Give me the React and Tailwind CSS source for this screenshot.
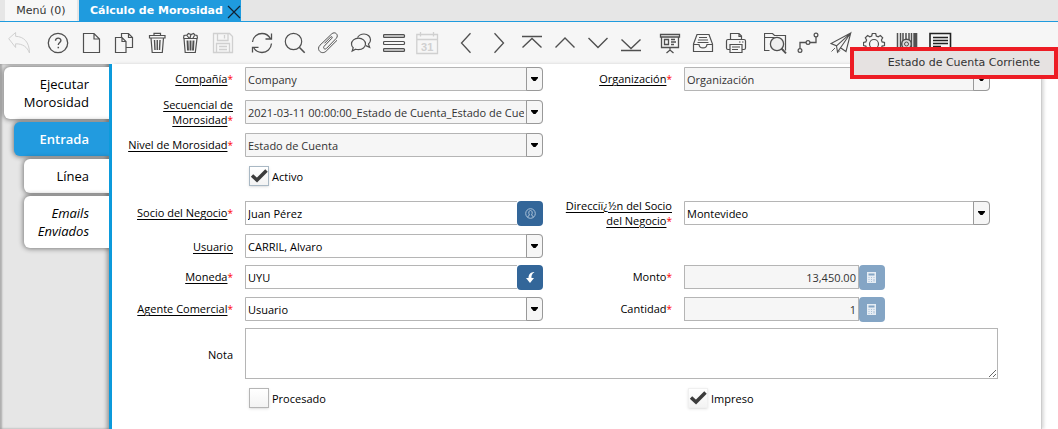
import React from "react";

const ICONS = {
  undo: (
    <path d="M.7 7.6 7.6 1.5v3.8C16 5.6 21.3 11 21.5 22c-2.4-6-6.4-9.200-13.900-9.200v3.700z" />
  ),
  help: (
    <>
      <circle cx="11" cy="12" r="9.700" strokeWidth="1.300" />
      <path d="M8.500 9.800c0-3.600 5.400-3.500 5.400-.3 0 2-2.600 2.200-2.600 4.500" strokeWidth="1.400" />
      <path d="M11.300 15.800v1.500" strokeWidth="1.500" />
    </>
  ),
  page: <path d="M3.500 2.500h10.500l5.500 5.500v13.500h-16zM14 2.500v5.500h5.500" strokeWidth="1.200" />,
  copy: (
    <>
      <path d="M2.500 6.500h6.500l4 4v11h-10.500zM9 6.500v4h4" strokeWidth="1.200" />
      <path d="M8.500 6.500v-4h7l4 4v10h-6.500M15.500 2.500v4h4" strokeWidth="1.200" />
    </>
  ),
  trash: (
    <>
      <path d="M3.500 4.500h15.500v2.500h-15.500zM8 4.500v-2.200h6.500v2.200M5 7l1.200 14.500h10.100L17.500 7" strokeWidth="1.200" />
      <path d="M8.500 9l.5 10M11.250 9v10M14 9l-.5 10" strokeWidth="1.400" />
    </>
  ),
  trashFull: (
    <>
      <path d="M4.500 7.500h14M5 7.500l1.200 14h10.100L18 7.500M4.500 7.500l.5-3 3-.5 1.500-1.500 2.500 1 2.500-1 1.500 1.500 2 .5.500 3M8 4.500l2 2.500M12 3.500l-1 3.500M15.500 4.500l-1.500 2.500" strokeWidth="1.200" />
      <path d="M8.500 9.500l.5 10M11.500 9.500v10M14.500 9.500l-.5 10" strokeWidth="1.900" />
    </>
  ),
  save: (
    <>
      <path d="M1.500 2.500h16l3 3v16h-19zM5.500 2.500v7h10.500v-7M12.500 4v3.500M4.500 21.500v-9h13v9M7 15.500h8M7 18.500h8" strokeWidth="1.300" />
    </>
  ),
  refresh: (
    <>
      <path d="M1.500 11C2 5.500 6.500 2.500 11 2.500c3.500 0 6.600 1.800 8.400 5M20.500 2.500v5.500h-6M20.500 12.500C20 18 16 21.500 11 21.500c-3.500 0-6.800-2-8.400-5M1.500 21.500v-5.200h6" strokeWidth="1.300" />
    </>
  ),
  search: (
    <>
      <circle cx="9.500" cy="10.500" r="8.200" strokeWidth="1.200" />
      <path d="m15.500 16.500 5.200 5.200" strokeWidth="1.600" />
    </>
  ),
  clip: (
    <path d="m14.800 7.300-7.600 7.900c-1.700 1.800.6 3.900 2.300 2.200l9.700-10c3.200-3.400-1.300-7.700-4.600-4.400L3 14.200c-4.300 4.500 1.800 10.200 6.200 5.900L20 9.300M14.800 7.300c.9-1 .2-2.300-1.100-1.300l-6.200 6.300" strokeWidth="1" />
  ),
  chat: (
    <>
      <path d="M7.500 6.500C9 4 11.500 3 14 3c4 0 6.500 2.700 6.500 5.800 0 1.900-.8 3.400-2 4.300l1.200 3.200-3.900-1.700" strokeWidth="1.200" />
      <path d="M8.500 7.200c4 0 7 2.500 7 5.700s-3 5.700-7 5.700c-1 0-2-.1-2.900-.4L2.200 20l1-3.200C2 15.700 1.500 14.500 1.500 12.900c0-3.200 3-5.700 7-5.700z" strokeWidth="1.200" />
    </>
  ),
  list: (
    <>
      <rect x=".5" y="3.500" width="21" height="3" rx="1" fill="#bbb" strokeWidth="1.200" />
      <rect x=".5" y="10.500" width="21" height="3" rx="1" strokeWidth="1.200" />
      <rect x=".5" y="17.500" width="21" height="3" rx="1" fill="#bbb" strokeWidth="1.200" />
    </>
  ),
  calendar: (
    <>
      <path d="M.8 3.500h20.700v19H.8zM.8 8.500h20.700M4.500 1v4.500M17.500 1v4.500" strokeWidth="1.300" />
      <text x="11.200" y="19.500" textAnchor="middle" fontSize="11" fontWeight="bold" fontFamily="Liberation Sans, sans-serif" fill="currentColor" stroke="none">31</text>
    </>
  ),
  left: <path d="M15.500 2.300 6.500 12l9 9.700" strokeWidth="1.300" />,
  right: <path d="M6.500 2.300l9 9.700-9 9.700" strokeWidth="1.300" />,
  first: <path d="M1 5.500h20M1.500 16.500 11 7.500l9.500 9" strokeWidth="1.400" />,
  up: <path d="M1.500 16.500 11 7l9.500 9.500" strokeWidth="1.400" />,
  down: <path d="M1.500 7 11 16.500 20.500 7" strokeWidth="1.400" />,
  last: <path d="M1.500 8.500 11 17.500l9.500-9M1 19.500h20" strokeWidth="1.400" />,
  board: (
    <>
      <path d="M1.500 3.500h19v2.500h-19zM2.500 6v10.500h17V6M11 16.500v3M7.500 22l3.500-3 3.500 3" strokeWidth="1.300" />
      <path d="M5.500 8.500h4v5h-4zM12 8.500h4M12 11h5M12 13.500h3" strokeWidth="1.300" />
    </>
  ),
  tray: (
    <>
      <path d="M1.500 13 5 3.500h12L20.500 13v7.500h-19zM1.500 13.500h5.500c.5 4.500 7.500 4.500 8 0h5.500" strokeWidth="1.200" />
      <path d="M7 6.500h8M6 9h10M5.500 11.500h11" strokeWidth="1.200" />
    </>
  ),
  printer: (
    <>
      <path d="M5.500 8.500v-6h8.500l2.500 2.500v3.500M14 2.500v3h2.500M4.500 18.500H3c-1 0-1.500-.5-1.500-1.500v-7c0-1 .5-1.500 1.500-1.500h16c1 0 1.500.5 1.500 1.500v7c0 1-.5 1.500-1.500 1.500h-1.500M5 13.500h12v8H5z" strokeWidth="1.200" />
      <path d="M7 16h8M7 18.500h6M14 11h1.500M17 11h1.500" strokeWidth="1.200" />
    </>
  ),
  folder: (
    <>
      <path d="M5.500 19.500h-5v-17h8l2 2h11v15M.5 6.500h10" strokeWidth="1.200" />
      <circle cx="13" cy="13" r="6.600" fill="#f0f0f0" strokeWidth="1.300" />
      <path d="m17.500 17.500 4.500 4.800" strokeWidth="1.900" />
    </>
  ),
  workflow: (
    <>
      <circle cx="3" cy="19.500" r="1.900" strokeWidth="1.200" />
      <circle cx="11" cy="11.500" r="1.900" strokeWidth="1.200" />
      <circle cx="19" cy="4" r="1.900" strokeWidth="1.200" />
      <path d="M3 17.500v-6h6M13 11.500h6V6" strokeWidth="1.300" />
    </>
  ),
  plane: (
    <>
      <path d="M20.700 2 1 12.500l5.500 2.300L20.700 2 16 20.500l-5.500-3.700L20.700 2M6.500 14.800l1 6.200 3-4.200" strokeWidth="1.100" />
      <path d="M5 17l-3.500 3.500M10 19.500l-2 2" strokeWidth=".9" />
    </>
  ),
  gear: (
    <>
      <path d="M9.300 2.500h3.400l.6 2.500 1.900.8 2.200-1.300 2.300 2.300-1.300 2.200.7 1.900 2.400.6v3l-2.400.6-.7 1.900 1.300 2.200-2.300 2.300-2.200-1.300-1.900.8-.6 2.500H9.300L8.700 21l-1.900-.8-2.200 1.300-2.300-2.300L3.600 17l-.8-1.900-2.300-.6v-3l2.300-.6.800-1.900-1.300-2.200 2.300-2.300 2.200 1.300L8.700 5z" strokeWidth="1.200" />
      <circle cx="11" cy="13" r="4.500" strokeWidth="1.200" />
    </>
  ),
  barcode: (
    <>
      <path d="M1.500 2v20M4.500 2v20M7 2v20M10 2v20M13 2v20M15.500 2v20" strokeWidth="1.500" />
      <path d="M19.300 2v20" strokeWidth="4" />
      <circle cx="10.500" cy="13" r="4.800" fill="#ddd" strokeWidth="1.500" />
      <circle cx="10.500" cy="13" r="2" />
    </>
  ),
  form: (
    <g className="text-[#222]">
      <path d="M1 2.500h20.500v19H1z" stroke="currentColor" strokeWidth="1.600" />
      <path d="M4 6.500h15M4 9.500h15M4 12.500h15M4 15.500h8" stroke="currentColor" strokeWidth="1.600" />
    </g>
  ),
};

const TOOL_GROUPS = [
  [["undo", "Deshacer", true]],
  [["help", "Ayuda"], ["page", "Nuevo"], ["copy", "Copiar"], ["trash", "Eliminar"], ["trashFull", "Eliminar selección"], ["save", "Guardar", true]],
  [["refresh", "Refrescar"], ["search", "Buscar"], ["clip", "Adjunto"], ["chat", "Chat"], ["list", "Cuadrícula"], ["calendar", "Calendario", true]],
  [["left", "Anterior"], ["right", "Siguiente"], ["first", "Primero"], ["up", "Arriba"], ["down", "Abajo"], ["last", "Último"]],
  [["board", "Informe"], ["tray", "Archivo"], ["printer", "Imprimir"]],
  [["folder", "Zoom"], ["workflow", "Flujo"], ["plane", "Solicitudes"], ["gear", "Proceso"], ["barcode", "Producto"], ["form", "Formulario"]],
];

function ToolButton({ name, label, disabled }) {
  return (
    <button
      type="button"
      aria-label={label}
      disabled={disabled}
      className={`flex h-full w-[33px] shrink-0 items-center justify-center ${disabled ? "text-[#d0d0d0]" : "text-[#505050]"}`}
    >
      <svg width="23" height="24" viewBox="0 0 23 24" fill="none" stroke="currentColor" aria-hidden="true">
        {ICONS[name]}
      </svg>
    </button>
  );
}

function Label({ htmlFor, children, required, link = true }) {
  return (
    <label htmlFor={htmlFor} className="flex h-6 items-center justify-end text-right leading-[15px]">
      <span>
        <span className={link ? "underline underline-offset-2" : ""}>{children}</span>
        {required && <span className="text-[10px] text-[#ff0000]">*</span>}
      </span>
    </label>
  );
}

function Select({ id, value, readOnly, className = "" }) {
  return (
    <div className={`flex h-6 ${className}`}>
      <select
        id={id}
        className={`w-full min-w-0 appearance-none rounded-r border border-[#b5b5b5] pt-0.5 pr-[18px] pl-[2px] ${readOnly ? "bg-[#f6f6f6] text-[#333]" : "bg-white"}`}
      >
        <option>{value}</option>
      </select>
      <span className="pointer-events-none -ml-[17px] flex w-[17px] shrink-0 items-center justify-center rounded-r border border-[#999] bg-[#f6f6f6]">
        <svg width="7" height="4" viewBox="0 0 7 4" aria-hidden="true">
          <path d="M0 0h7v1L4.500 4h-2L0 1z" fill="#000" />
        </svg>
      </span>
    </div>
  );
}

function Lookup({ id, value, label, children }) {
  return (
    <div className="flex h-6">
      <input id={id} defaultValue={value} className="w-full min-w-0 border border-r-0 border-[#b5b5b5] bg-white pt-0.5 pl-[2px]" />
      <button type="button" aria-label={label} className="flex h-[25px] w-[26px] shrink-0 items-center justify-center rounded bg-[#336699]">
        {children}
      </button>
    </div>
  );
}

function NumberField({ id, value }) {
  return (
    <div className="flex h-6 w-[64%]">
      <input id={id} defaultValue={value} readOnly className="w-full min-w-0 border border-[#b5b5b5] bg-[#f6f6f6] pt-0.5 pr-[2px] text-right text-[#333]" />
      <button type="button" disabled aria-label="Calculadora" className="flex h-[25px] w-[26px] shrink-0 items-center justify-center rounded bg-[#84a5c5]">
        <svg width="9" height="11" viewBox="0 0 9 11" aria-hidden="true">
          <path d="M0 0h9v11H0z" fill="#e6edf4" />
          <path d="M1.500 1.500h6v2h-6z" fill="#84a5c5" />
          <path d="M1.500 5h1v1h-1zM4 5h1v1H4zM6.500 5h1v1h-1zM1.500 7h1v1h-1zM4 7h1v1H4zM6.500 7h1v2.500h-1zM1.500 9h1v1h-1zM4 9h1v1H4z" fill="#a9c0d7" />
        </svg>
      </button>
    </div>
  );
}

function Check({ id, label, checked, border }) {
  return (
    <div className="flex h-5 items-center gap-[3px] pl-1">
      <span className="grid h-5 w-5 shrink-0">
        <input
          id={id}
          type="checkbox"
          defaultChecked={checked}
          className={`peer col-start-1 row-start-1 h-5 w-5 appearance-none border bg-linear-to-b from-white to-[#f3f3f3] shadow-sm ${border}`}
        />
        <svg width="20" height="20" viewBox="0 0 20 20" aria-hidden="true" className="pointer-events-none col-start-1 row-start-1 hidden peer-checked:block">
          <path d="M3 9.500 8 14 17.500 4.500" fill="none" stroke="#3c3c3c" strokeWidth="3.500" />
        </svg>
      </span>
      <label htmlFor={id} className="pt-0.5">{label}</label>
    </div>
  );
}

const SIDE_TAB = "flex justify-end rounded-l-md py-2 pr-5 text-right leading-[18px] shadow-[0_0_5px_1px_rgba(0,0,0,0.45)]";

export default function App() {
  return (
    <div className="relative flex min-h-screen flex-col overflow-hidden bg-white font-['Open_Sans','Noto_Sans',sans-serif] text-[11px] text-black">
      <nav className="flex h-[22px] border-b border-[#1f9bde] bg-[#e6e6e6] pl-[5px] font-['DejaVu_Sans',sans-serif]">
        <a href="#menu" className="flex w-[72px] items-center justify-center bg-[#f7f7f7] pt-0.5 text-[#333]">Menú (0)</a>
        <div className="ml-[2px] flex items-center gap-1 bg-[#1f9bde] pt-0.5 pl-[11px] text-white">
          <a href="#morosidad" className="font-bold">Cálculo de Morosidad</a>
          <button type="button" aria-label="Cerrar" className="text-[#123]">
            <svg width="14" height="14" viewBox="0 0 14 14" fill="none" stroke="currentColor" strokeWidth="1.200" aria-hidden="true">
              <path d="m1 1 12 12M13 1 1 13" />
            </svg>
          </button>
        </div>
      </nav>

      <div role="toolbar" className="flex h-[42px] gap-1.5 bg-[#f6f6f6] pl-[3px]">
        {TOOL_GROUPS.map((group, i) => (
          <div key={i} className="flex">
            {group.map(([name, label, disabled]) => (
              <ToolButton key={name} name={name} label={label} disabled={disabled} />
            ))}
          </div>
        ))}
      </div>

      <main className="flex flex-1">
        <nav className="flex w-28 shrink-0 flex-col gap-[3px] overflow-hidden border-r-[3px] border-[#0c9bdc] bg-[#e6e6e6] pt-[3px] text-[13px] shadow-[inset_2px_0_2px_rgba(0,0,0,0.25),inset_-4px_0_4px_-2px_rgba(0,0,0,0.35)]">
          <a href="#ejecutar" className={`${SIDE_TAB} ml-1 bg-white`}>Ejecutar<br />Morosidad</a>
          <a href="#entrada" className={`${SIDE_TAB} ml-3.5 bg-[#229bdf] font-semibold text-white`}>Entrada</a>
          <a href="#linea" className={`${SIDE_TAB} ml-6 bg-white`}>Línea</a>
          <a href="#emails" className={`${SIDE_TAB} ml-6 bg-white italic`}>Emails<br />Enviados</a>
        </nav>

        <form className="mr-4 grid flex-1 auto-rows-min grid-cols-[121px_minmax(0,298fr)_117px_minmax(0,314fr)] grid-rows-[33px_33px_33px_35px_33px_31px_32px_31px_60px_auto] items-start gap-x-3 border-r border-[#ccc] pt-[3px] pr-[43px] shadow-[2px_0_3px_rgba(0,0,0,0.15)]">
          <Label htmlFor="compania" required>Compañía</Label>
          <Select id="compania" value="Company" readOnly />
          <Label htmlFor="organizacion" required>Organización</Label>
          <Select id="organizacion" value="Organización" readOnly className="mr-2" />

          <Label htmlFor="secuencial" required>Secuencial de<br />Morosidad</Label>
          <Select id="secuencial" value="2021-03-11 00:00:00_Estado de Cuenta_Estado de Cuenta" readOnly />

          <div className="col-start-1"><Label htmlFor="nivel" required>Nivel de Morosidad</Label></div>
          <Select id="nivel" value="Estado de Cuenta" readOnly />

          <div className="col-start-2"><Check id="activo" label="Activo" checked border="border-[#a9b8c4]" /></div>

          <div className="col-start-1"><Label htmlFor="socio" required>Socio del Negocio</Label></div>
          <Lookup id="socio" value="Juan Pérez" label="Buscar socio">
            <svg width="11" height="11" viewBox="0 0 11 11" fill="none" stroke="#a9c0d7" aria-hidden="true">
              <circle cx="5.500" cy="5.500" r="4.800" />
              <path d="M3 9.500V8.200l1.500-1C3 4.500 4 2.500 5.500 2.500S8 4.500 6.500 7.200l1.500 1v1.300" />
            </svg>
          </Lookup>
          <Label htmlFor="direccion" required>Direcciï¿½n del Socio<br />del Negocio</Label>
          <Select id="direccion" value="Montevideo" className="mr-2" />

          <Label htmlFor="usuario">Usuario</Label>
          <Select id="usuario" value="CARRIL, Alvaro" />

          <div className="col-start-1"><Label htmlFor="moneda" required>Moneda</Label></div>
          <Lookup id="moneda" value="UYU" label="Elegir moneda">
            <svg width="9" height="11" viewBox="0 0 9 11" fill="#fff" aria-hidden="true">
              <path d="M8.500 0C5 0 2.500 2 2.500 6H0l4 5 4-5H5.500C5.300 3.500 6 1.500 8.500 0z" />
            </svg>
          </Lookup>
          <Label htmlFor="monto" required link={false}>Monto</Label>
          <NumberField id="monto" value="13,450.00" />

          <Label htmlFor="agente" required>Agente Comercial</Label>
          <Select id="agente" value="Usuario" />
          <Label htmlFor="cantidad" required link={false}>Cantidad</Label>
          <NumberField id="cantidad" value="1" />

          <div className="pt-3.5"><Label htmlFor="nota" link={false}>Nota</Label></div>
          <textarea id="nota" className="col-span-3 block h-[51px] w-full resize border border-[#b5b5b5] bg-white" />

          <div className="col-start-2"><Check id="procesado" label="Procesado" border="border-[#b5b5b5]" /></div>
          <div className="col-start-4"><Check id="impreso" label="Impreso" checked border="border-[#f0f0f0]" /></div>
        </form>
      </main>

      <div role="menu" className="absolute top-[47px] right-0 flex h-8 w-52 border-4 border-[#ed1c24] bg-[#e6e2e1] font-['DejaVu_Sans',sans-serif] text-[#333]">
        <button type="button" role="menuitem" className="w-full pr-3.5 text-right">Estado de Cuenta Corriente</button>
      </div>
    </div>
  );
}
